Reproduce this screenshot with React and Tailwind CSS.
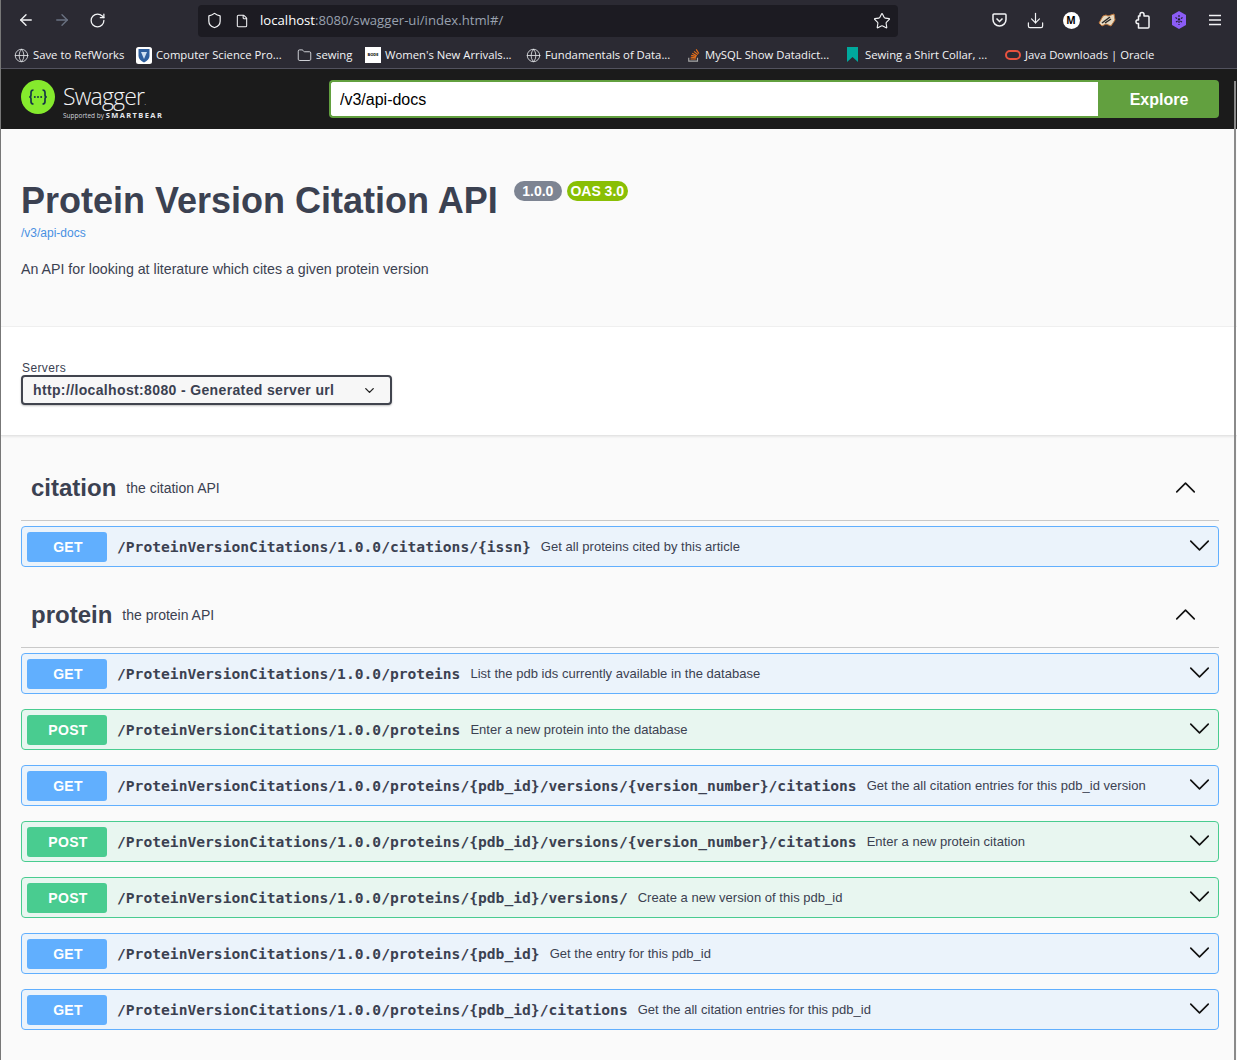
import React from 'react';
import { ArrowLeft, ArrowRight, RotateCw, Shield, File, Star, Download, Globe, Folder, ChevronDown, ChevronUp } from 'lucide-react';

const bookmarks = [
  { label: 'Save to RefWorks', icon: 'globe', w: 'w-[122px]' },
  { label: 'Computer Science Pro...', icon: 'shield', w: 'w-[161px]' },
  { label: 'sewing', icon: 'folder', w: 'w-[68px]' },
  { label: "Women's New Arrivals...", icon: 'bode', w: 'w-[161px]' },
  { label: 'Fundamentals of Data...', icon: 'globe', w: 'w-[161px]' },
  { label: 'MySQL Show Datadict...', icon: 'so', w: 'w-[160px]' },
  { label: 'Sewing a Shirt Collar, ...', icon: 'mark', w: 'w-[158px]' },
  { label: 'Java Downloads | Oracle', icon: 'oracle', w: 'w-[160px]' },
];

const BookmarkIcon = ({ type }) => {
  if (type === 'globe') return <Globe size={15} strokeWidth={1.3} className="text-gray-200 shrink-0" />;
  if (type === 'folder') return <Folder size={15} strokeWidth={1.4} className="text-gray-200 shrink-0" />;
  if (type === 'shield') {
    return (
      <svg width="16" height="17" viewBox="0 0 16 17" className="shrink-0">
        <rect width="16" height="17" rx="2.500" fill="#fff" />
        <path d="M2.500 2h11v7c0 3-2.500 5-5.500 6.500C5 14 2.500 12 2.500 9z" fill="#2f5f9e" />
        <path d="M5 5l3 7 3-7z" fill="#cfe0f2" />
      </svg>
    );
  }
  if (type === 'bode') {
    return <div className="w-4 h-4 bg-white shrink-0 flex items-center justify-center text-[4px] font-bold text-black">BODE</div>;
  }
  if (type === 'so') {
    return (
      <svg width="14" height="17" viewBox="0 0 16 17" className="shrink-0">
        <path d="M2 11v4h10v-4" fill="none" stroke="#a8a8a8" strokeWidth="1.300" />
        <path d="M4 12.500h6M4.200 10.500l6 .6M4.800 8.300l5.800 1.500M6 6l5.200 2.700M8 3.800l4.500 3.600M10.500 1.500l3 4.700" stroke="#e8701a" strokeWidth="1.300" fill="none" />
      </svg>
    );
  }
  if (type === 'mark') {
    return (
      <svg width="11" height="15" viewBox="0 0 11 15" className="shrink-0 mr-[3px] mb-[2px]">
        <path d="M0 0h11v15L5.500 10 0 15z" fill="#00a99d" />
      </svg>
    );
  }
  return <div className="w-[16px] h-[10px] rounded-full border-2 border-[#e8523f] shrink-0" />;
};

const ToolSlot = ({ children }) => <div className="w-9 flex items-center justify-center shrink-0">{children}</div>;

const Chrome = () => (
  <div className="bg-[#2b2a33] h-[69px] border-b border-[#52525e] font-['Open_Sans',sans-serif]">
    <div className="h-10 flex items-center">
      <div className="w-[197px] flex items-center pl-[16px] gap-[18px] shrink-0">
        <ArrowLeft size={18} strokeWidth={1.8} className="text-gray-100" />
        <ArrowRight size={18} strokeWidth={1.8} className="text-gray-500" />
        <RotateCw size={17} strokeWidth={1.8} className="text-gray-100" />
      </div>
      <div className="w-[700px] h-8 bg-[#1c1b22] rounded-[4px] flex items-center pl-[8px] pr-[7px] shrink-0 mt-[1px]">
        <Shield size={17} strokeWidth={1.7} className="text-gray-100" />
        <File size={14} strokeWidth={1.8} className="text-gray-100 ml-[12px]" />
        <span className="ml-[11px] text-[13.150px] text-white pt-[1px]">localhost<span className="text-gray-400">:8080/swagger-ui/index.html#/</span></span>
        <Star size={18} strokeWidth={1.5} className="text-gray-100 ml-auto" />
      </div>
      <div className="flex-1 flex items-center pl-[83px]">
        <ToolSlot>
          <svg width="17" height="16" viewBox="0 0 16 16" fill="none" stroke="#f3f4f6" strokeWidth="1.500">
            <path d="M2.500 2h11a1 1 0 0 1 1 1v4.500a6.500 6.500 0 0 1-13 0V3a1 1 0 0 1 1-1z" />
            <path d="M5 6.500l3 3 3-3" />
          </svg>
        </ToolSlot>
        <ToolSlot><Download size={19} strokeWidth={1.500} className="text-gray-100" /></ToolSlot>
        <ToolSlot>
          <div className="w-[17px] h-[17px] rounded-full bg-white flex items-center justify-center text-[10px] font-bold text-black">M</div>
        </ToolSlot>
        <ToolSlot>
          <svg width="18" height="15" viewBox="0 0 18 15">
            <path d="M1 10l4-7 3-1 2 1 6-2 1 6-4 6-5-2-4 2z" fill="#e8d9c0" stroke="#b8733a" />
            <path d="M4 10l8-6M7 10l6-4" stroke="#2a2a2a" strokeWidth="1.500" />
          </svg>
        </ToolSlot>
        <ToolSlot>
          <svg width="16" height="18" viewBox="0 0 16 18" fill="none" stroke="#f3f4f6" strokeWidth="1.500" strokeLinejoin="round">
            <path d="M7 1.500a2 2 0 0 1 2 2V5h4a1 1 0 0 1 1 1v10a1 1 0 0 1-1 1H3.500v-4.500H2a2 2 0 0 1 0-3.500h1.500V5H5V3.500a2 2 0 0 1 2-2z" />
          </svg>
        </ToolSlot>
        <ToolSlot>
          <svg width="16" height="18" viewBox="0 0 16 18">
            <path d="M8 0l7 4v10l-7 4-7-4V4z" fill="#8b5cf6" />
            <path d="M8 4v10M4.500 6.500l7 5M11.500 6.500l-7 5" stroke="#1c1b22" strokeWidth="1.100" strokeDasharray="2 1" />
          </svg>
        </ToolSlot>
        <ToolSlot>
          <svg width="14" height="12" viewBox="0 0 14 12" stroke="#f3f4f6" strokeWidth="1.400">
            <path d="M1 1.500h12M1 6h12M1 10.500h12" />
          </svg>
        </ToolSlot>
      </div>
    </div>
    <div className="h-7 flex items-center pl-[13px] pt-[2px]">
      {bookmarks.map((b) => (
        <div key={b.label} className={`${b.w} flex items-center gap-[4px] shrink-0 text-[11.300px] text-gray-100 whitespace-nowrap overflow-hidden`}>
          <BookmarkIcon type={b.icon} />
          <span>{b.label}</span>
        </div>
      ))}
    </div>
  </div>
);

const Topbar = () => (
  <div className="bg-[#1b1b1b] h-[60px] flex items-center pl-[20px] pr-[18px]">
    <div className="w-[308px] shrink-0 flex items-center font-['Open_Sans',sans-serif]">
      <svg width="34" height="34" viewBox="0 0 34 34" className="shrink-0 mt-[-4px]">
        <circle cx="17" cy="17" r="17" fill="#85ea2d" />
        <path d="M12.500 10c-2 0-2.500 1-2.500 2.500v2.500c0 1-.7 2-1.800 2 1.100 0 1.800 1 1.800 2v2.500c0 1.500.5 2.500 2.500 2.500M21.500 10c2 0 2.500 1 2.500 2.500v2.500c0 1 .7 2 1.800 2-1.100 0-1.800 1-1.800 2v2.500c0 1.500-.5 2.500-2.500 2.500" fill="none" stroke="#173647" strokeWidth="1.700" />
        <circle cx="13.800" cy="17" r="1" fill="#173647" />
        <circle cx="17" cy="17" r="1" fill="#173647" />
        <circle cx="20.200" cy="17" r="1" fill="#173647" />
      </svg>
      <div className="ml-2 flex flex-col mt-[5px]">
        <span className="text-[23px] leading-[26px] text-gray-100 font-light tracking-[-0.8px]">Swagger<span className="text-[8px]">.</span></span>
        <span className="text-[6.500px] leading-[8px] text-gray-300 mt-[-4px] whitespace-nowrap">Supported by <span className="text-[7.500px] font-bold tracking-[1.400px] text-gray-200">SMARTBEAR</span></span>
      </div>
    </div>
    <div className="flex-1 h-[38px] flex font-['Liberation_Sans',sans-serif]">
      <input
        readOnly
        value="/v3/api-docs"
        className="flex-1 min-w-0 bg-white border-2 border-[#62a03f] border-r-0 rounded-l-[4px] pl-[9px] pt-[2px] text-[16px] text-black outline-none"
      />
      <button className="w-[121px] bg-[#62a03f] text-white text-[16px] font-bold rounded-r-[4px] pt-[1px] pl-[1px]">Explore</button>
    </div>
  </div>
);

const Info = () => (
  <div className="bg-[#fafafa] h-[198px] border-b border-[#f0f0f0] pl-[20px] pt-[50px] text-[#3b4151]">
    <div className="flex items-start h-[44px]">
      <h1 className="text-[36px] leading-[43px] font-bold">Protein Version Citation API</h1>
      <span className="ml-[16px] mt-[2px] h-[20px] px-[8.500px] rounded-[57px] bg-[#7d8492] text-white text-[14px] leading-[21px] font-bold">1.0.0</span>
      <span className="ml-[5px] mt-[2px] h-[20px] px-[3.500px] rounded-[57px] bg-[#89bf04] text-white text-[14px] leading-[21px] font-bold">OAS 3.0</span>
    </div>
    <a className="block mt-[2px] text-[12px] leading-[16px] text-[#4990e2]">/v3/api-docs</a>
    <p className="mt-[18px] text-[14.200px] leading-[20px]">An API for looking at literature which cites a given protein version</p>
  </div>
);

const Servers = () => (
  <div className="bg-white h-[109px] border-b border-[#e4e4e4] pl-[21px] pt-[35px] text-[#3b4151] shadow-[0_1px_2px_0_rgba(0,0,0,0.08)]">
    <div className="text-[12px] leading-[13px] tracking-[0.4px]">Servers</div>
    <div className="w-[371px] h-[30px] ml-[-1px] border-2 border-[#41444e] rounded-[4px] bg-[#f7f7f7] flex items-center pl-[10px] pr-[13px] shadow-[0_1px_2px_0_rgba(0,0,0,0.25)] justify-between">
      <span className="text-[14px] font-bold tracking-[0.36px]">http://localhost:8080 - Generated server url</span>
      <ChevronDown size={15} strokeWidth={2.2} className="text-[#222]" />
    </div>
  </div>
);

const Op = ({ method, path, summary }) => {
  const isGet = method === 'GET';
  return (
    <div className={`h-[41px] flex items-center rounded-[4px] border pl-[5px] ${isGet ? 'bg-[#ebf3fb] border-[#61affe]' : 'bg-[#e8f6f0] border-[#49cc90]'}`}>
      <span className={`w-[80px] h-[30px] rounded-[3px] text-white text-[14px] font-bold tracking-[0.3px] pt-[1px] pl-[2px] flex items-center justify-center shrink-0 ${isGet ? 'bg-[#61affe]' : 'bg-[#49cc90]'}`}>{method}</span>
      <span className="ml-[10px] font-['DejaVu_Sans_Mono',monospace] font-bold text-[14.630px] text-[#3b4151] whitespace-nowrap">{path}</span>
      <span className="ml-[10px] text-[13px] tracking-[0.03px] text-[#3b4151] whitespace-nowrap">{summary}</span>
      <ChevronDown size={35} strokeWidth={1.100} className="ml-auto mr-[1px] mb-[2px] text-[#111] shrink-0" />
    </div>
  );
};

const Section = ({ name, desc, children }) => (
  <div>
    <div className="h-[65px] flex items-center border-b border-[#c9c9c9] pl-[10px] pr-[16px]">
      <h3 className="text-[24px] font-bold text-[#3b4151]">{name}</h3>
      <span className="ml-[10px] text-[14px] pt-[1px] text-[#3b4151]">{desc}</span>
      <ChevronUp size={35} strokeWidth={1.100} className="ml-auto mb-[2px] text-[#111] shrink-0" />
    </div>
    <div className="mt-[5px] flex flex-col gap-[15px]">{children}</div>
  </div>
);

export default function App() {
  return (
    <div className="relative h-[1060px] overflow-hidden bg-[#fafafa] border-l border-[#777] font-['Liberation_Sans',sans-serif]">
      <Chrome />
      <Topbar />
      <Info />
      <Servers />
      <div className="pl-[20px] pt-[20px] pr-[18px]">
        <Section name="citation" desc="the citation API">
          <Op method="GET" path="/ProteinVersionCitations/1.0.0/citations/{issn}" summary="Get all proteins cited by this article" />
        </Section>
        <div className="mt-[16px]">
          <Section name="protein" desc="the protein API">
            <Op method="GET" path="/ProteinVersionCitations/1.0.0/proteins" summary="List the pdb ids currently available in the database" />
            <Op method="POST" path="/ProteinVersionCitations/1.0.0/proteins" summary="Enter a new protein into the database" />
            <Op method="GET" path="/ProteinVersionCitations/1.0.0/proteins/{pdb_id}/versions/{version_number}/citations" summary="Get the all citation entries for this pdb_id version" />
            <Op method="POST" path="/ProteinVersionCitations/1.0.0/proteins/{pdb_id}/versions/{version_number}/citations" summary="Enter a new protein citation" />
            <Op method="POST" path="/ProteinVersionCitations/1.0.0/proteins/{pdb_id}/versions/" summary="Create a new version of this pdb_id" />
            <Op method="GET" path="/ProteinVersionCitations/1.0.0/proteins/{pdb_id}" summary="Get the entry for this pdb_id" />
            <Op method="GET" path="/ProteinVersionCitations/1.0.0/proteins/{pdb_id}/citations" summary="Get the all citation entries for this pdb_id" />
          </Section>
        </div>
      </div>
      {/* scrollbar */}
      <div className="absolute top-[81px] bottom-0 right-[1px] w-[2px] bg-[#8a8a8a]" />
    </div>
  );
}
